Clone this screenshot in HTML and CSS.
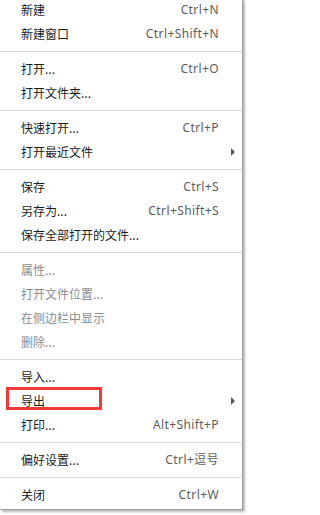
FILE: index.html
```html
<!DOCTYPE html>
<html lang="zh-CN">
<head>
<meta charset="utf-8">
<title>文件菜单</title>
<link rel="stylesheet" href="styles.css">
</head>
<body>
<div class="stage">
  <div class="menu">
    <div class="item"><span class="label">新建</span><span class="key">Ctrl+N</span></div>
    <div class="item"><span class="label">新建窗口</span><span class="key">Ctrl+Shift+N</span></div>
    <div class="sep"></div>
    <div class="item"><span class="label">打开...</span><span class="key">Ctrl+O</span></div>
    <div class="item"><span class="label">打开文件夹...</span></div>
    <div class="sep"></div>
    <div class="item"><span class="label">快速打开...</span><span class="key">Ctrl+P</span></div>
    <div class="item"><span class="label">打开最近文件</span><span class="arrow"></span></div>
    <div class="sep"></div>
    <div class="item"><span class="label">保存</span><span class="key">Ctrl+S</span></div>
    <div class="item"><span class="label">另存为...</span><span class="key">Ctrl+Shift+S</span></div>
    <div class="item"><span class="label">保存全部打开的文件...</span></div>
    <div class="sep"></div>
    <div class="item disabled"><span class="label">属性...</span></div>
    <div class="item disabled"><span class="label">打开文件位置...</span></div>
    <div class="item disabled"><span class="label">在侧边栏中显示</span></div>
    <div class="item disabled"><span class="label">删除...</span></div>
    <div class="sep"></div>
    <div class="item"><span class="label">导入...</span></div>
    <div class="item"><span class="label">导出</span><span class="arrow"></span></div>
    <div class="item"><span class="label">打印...</span><span class="key">Alt+Shift+P</span></div>
    <div class="sep"></div>
    <div class="item"><span class="label">偏好设置...</span><span class="key">Ctrl+逗号</span></div>
    <div class="sep"></div>
    <div class="item"><span class="label">关闭</span><span class="key">Ctrl+W</span></div>
  </div>
  <div class="highlight"></div>
</div>
</body>
</html>
```
FILE: styles.css
```css
html, body {
  margin: 0;
  padding: 0;
  background: #ffffff;
}

.stage {
  position: relative;
  width: 248px;
  height: 515px;
  overflow: hidden;
}

.menu {
  width: 242px;
  margin-top: -2px;
  padding-bottom: 2px;
  background: #ffffff;
  border-right: 1px solid #9c9c9c;
  border-bottom: 1px solid #9c9c9c;
  box-shadow: 2px 2px 2px rgba(0, 0, 0, 0.28);
  font-family: "Noto Sans CJK SC", "Noto Sans", sans-serif;
  font-size: 12px;
  color: #1b1b1b;
}

.item {
  display: grid;
  grid-template-columns: 1fr auto 23px;
  align-items: center;
  height: 24px;
  line-height: 24px;
  padding-left: 21px;
}

.label {
  grid-column: 1;
  white-space: nowrap;
}

.key {
  grid-column: 2;
  font-family: "Noto Sans", "Noto Sans CJK SC", sans-serif;
  letter-spacing: 0.4px;
  color: #5c5c5c;
  white-space: nowrap;
}

.key:lang(zh-CN) {
  font-family: "Noto Sans", "Noto Sans CJK SC", sans-serif;
}

.arrow {
  grid-column: 3;
  width: 0;
  height: 0;
  margin-left: 12px;
  border-left: 4px solid #5a5a5a;
  border-top: 4px solid transparent;
  border-bottom: 4px solid transparent;
}

.disabled {
  color: #8c8c8c;
}

.sep {
  height: 1px;
  margin: 5px 0;
  background: #dadada;
}

.highlight {
  position: absolute;
  left: 6px;
  top: 387px;
  width: 90px;
  height: 17px;
  border: 3px solid #ef3a3c;
}
```
